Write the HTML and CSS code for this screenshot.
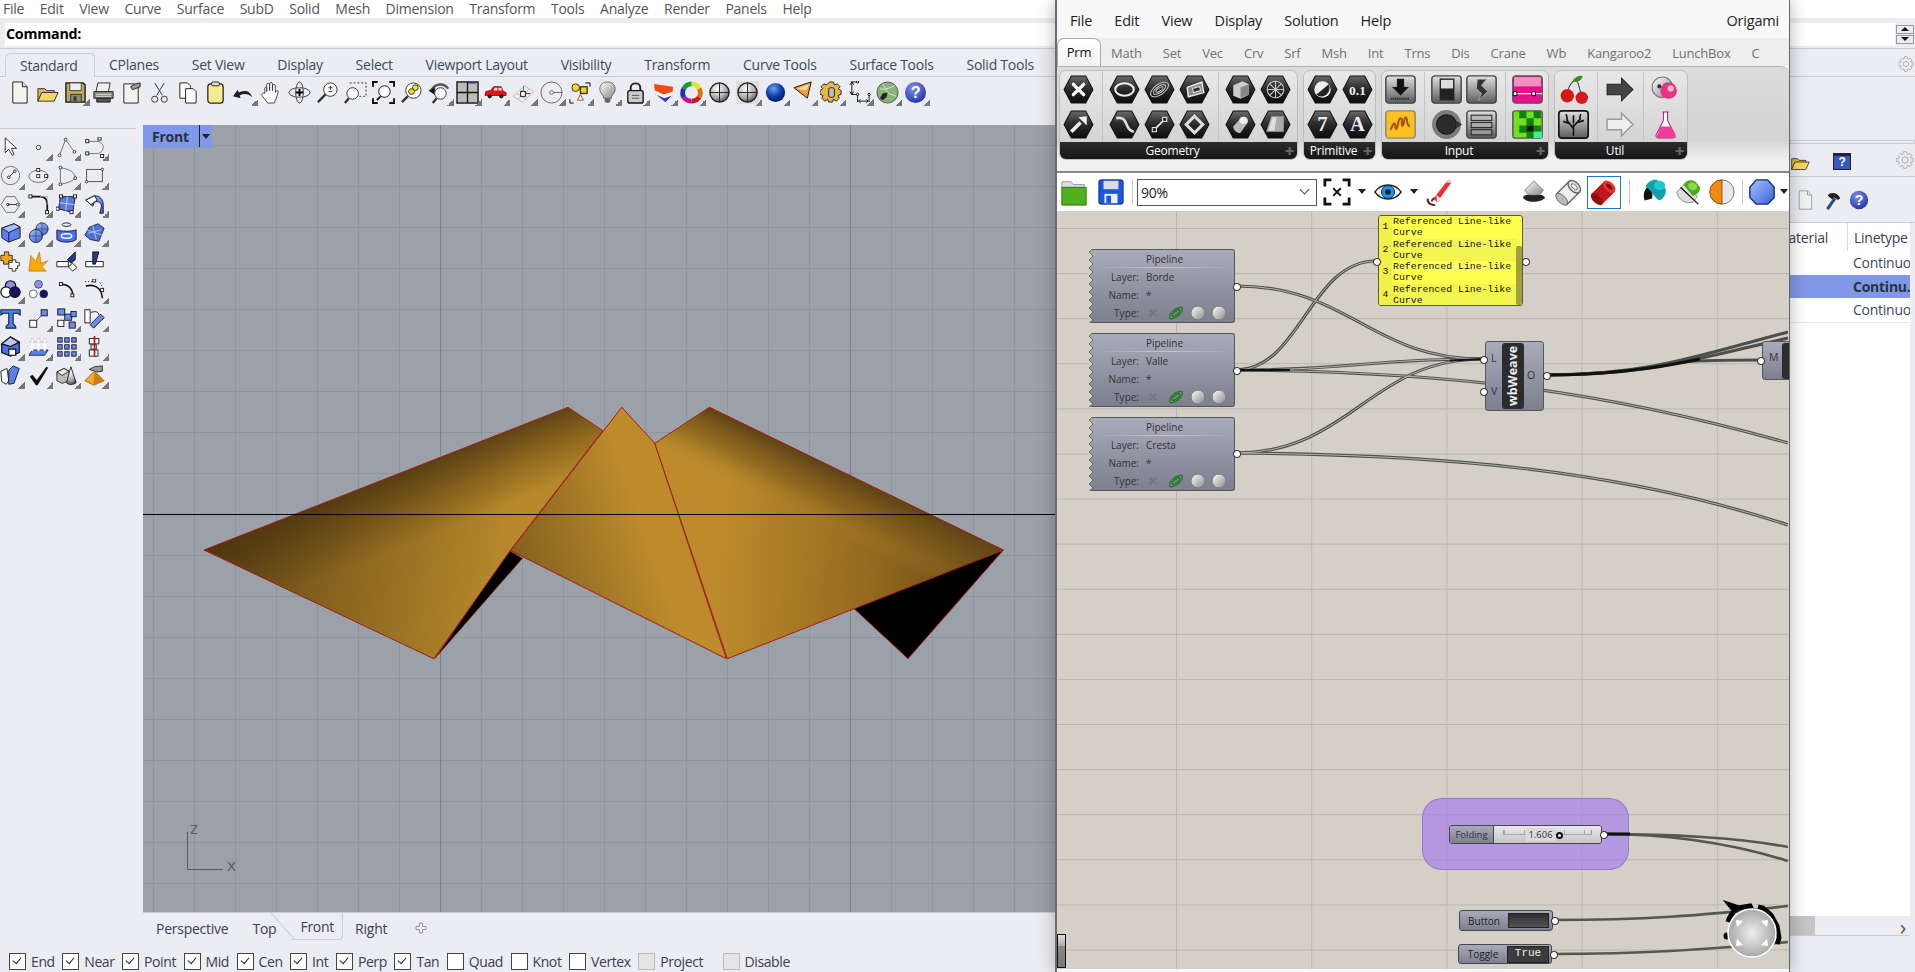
FILE: index.html
```html
<!DOCTYPE html>
<html lang="en">
<head>
<meta charset="utf-8">
<title>Rhino and Grasshopper</title>
<link rel="stylesheet" href="styles.css">
</head>
<body>
<svg class="defs" aria-hidden="true">
<defs>
<linearGradient id="hg" x1="0" y1="0" x2="0" y2="1"><stop offset="0" stop-color="#6a6a6a"/><stop offset=".45" stop-color="#2c2c2c"/><stop offset="1" stop-color="#0c0c0c"/></linearGradient>
<linearGradient id="sq" x1="0" y1="0" x2="0" y2="1"><stop offset="0" stop-color="#e0e0e0"/><stop offset="1" stop-color="#5c5c5c"/></linearGradient>
<linearGradient id="gy" x1="0" y1="0" x2="1" y2="1"><stop offset="0" stop-color="#fff"/><stop offset="1" stop-color="#888"/></linearGradient>
<radialGradient id="sph" cx=".4" cy=".3" r=".8"><stop offset="0" stop-color="#fff"/><stop offset=".6" stop-color="#aaa"/><stop offset="1" stop-color="#333"/></radialGradient>
<radialGradient id="blu" cx=".4" cy=".3" r=".8"><stop offset="0" stop-color="#6fa0f0"/><stop offset=".5" stop-color="#0c3fb0"/><stop offset="1" stop-color="#011040"/></radialGradient>
<radialGradient id="hlp" cx=".4" cy=".3" r=".8"><stop offset="0" stop-color="#7c90ec"/><stop offset="1" stop-color="#1a2ea0"/></radialGradient>
<radialGradient id="dialg"><stop offset="0" stop-color="#eee"/><stop offset="1" stop-color="#a8a8a8"/></radialGradient>
<linearGradient id="bl" x1="0" y1="0" x2="1" y2="1"><stop offset="0" stop-color="#a8c0ff"/><stop offset="1" stop-color="#3a62d8"/></linearGradient>
<linearGradient id="geoL1" gradientUnits="userSpaceOnUse" x1="386" y1="478" x2="412" y2="543"><stop offset="0" stop-color="#5e4316"/><stop offset=".5" stop-color="#8f691f"/><stop offset="1" stop-color="#b8892b"/></linearGradient>
<linearGradient id="geoL2" gradientUnits="userSpaceOnUse" x1="210" y1="550" x2="500" y2="600"><stop offset="0" stop-color="#4a3410" stop-opacity=".8"/><stop offset="1" stop-color="#4a3410" stop-opacity="0"/></linearGradient>
<linearGradient id="geoM" gradientUnits="userSpaceOnUse" x1="510" y1="560" x2="640" y2="515"><stop offset="0" stop-color="#80601f"/><stop offset="1" stop-color="#bd8b2c"/></linearGradient>
<linearGradient id="geoR1" gradientUnits="userSpaceOnUse" x1="856" y1="478" x2="830" y2="532"><stop offset="0" stop-color="#5e4316"/><stop offset=".55" stop-color="#7f5d1c" stop-opacity=".6"/><stop offset="1" stop-color="#b6872a" stop-opacity="0"/></linearGradient>
<linearGradient id="geoR2" gradientUnits="userSpaceOnUse" x1="720" y1="540" x2="1000" y2="560"><stop offset="0" stop-color="#bd8b2c"/><stop offset=".55" stop-color="#94691f"/><stop offset="1" stop-color="#5e4316"/></linearGradient>

<symbol id="r-new" viewBox="0 0 24 24"><path d="M5 1h10l5 5v17H5z" fill="#f4f4ee" stroke="#222"/><path d="M15 1v5h5" fill="#ddd" stroke="#222"/></symbol>
<symbol id="r-open" viewBox="0 0 24 24"><path d="M2 8h7l2 2h8v3H6L2 21z" fill="#e2b92e" stroke="#333"/><path d="M6 12h17l-4 9H2z" fill="#f6d860" stroke="#333"/></symbol>
<symbol id="r-save" viewBox="0 0 24 24"><path d="M2 2h18l2 2v18H2z" fill="#c0a860" stroke="#222" stroke-width="1.5"/><path d="M6 2h12v8H6z" fill="#eee" stroke="#444"/><path d="M7 14h11v8H7z" fill="#8a8a70" stroke="#333"/><path d="M10 16h3v5h-3z" fill="#333"/></symbol>
<symbol id="r-print" viewBox="0 0 24 24"><path d="M6 2h13l-2 10H4z" fill="#eee" stroke="#333"/><path d="M2 11h20v7H2z" fill="#888" stroke="#222"/><path d="M4 14h16M4 16h16" stroke="#ddd"/><path d="M5 18h14v4H5z" fill="#555" stroke="#222"/></symbol>
<symbol id="r-prop" viewBox="0 0 24 24"><path d="M4 3h11l4 3v17H4z" fill="#f4f4ee" stroke="#222"/><path d="M11 6l5-3 5-1v4l-5 2-3 1z" fill="#999" stroke="#222"/></symbol>
<symbol id="r-cut" viewBox="0 0 24 24" fill="none" stroke="#333"><path d="M7 2l8 13M17 2L9 15"/><circle cx="7" cy="19" r="3.2"/><circle cx="17" cy="19" r="3.2"/></symbol>
<symbol id="r-copy" viewBox="0 0 24 24"><path d="M4 2h8l3 3v13H4z" fill="#fff" stroke="#222"/><path d="M10 8h8l3 3v12H10z" fill="#fff" stroke="#222"/></symbol>
<symbol id="r-paste" viewBox="0 0 24 24"><rect x="4" y="3" width="16" height="20" rx="3" fill="#f8ea90" stroke="#222" stroke-width="1.3"/><rect x="8" y="1" width="8" height="4" rx="1" fill="#ddd" stroke="#222"/></symbol>
<symbol id="r-undo" viewBox="0 0 24 24"><path d="M21 17c-2-7-8-8-14-5l-1-3-5 7 8 2-1-3c4-2 9-2 13 2z" fill="#222"/></symbol>
<symbol id="r-hand" viewBox="0 0 24 24"><path d="M5 13V8c0-2 2-2 2 0v3V4c0-2 3-2 3 0v6V3c0-2 3-2 3 0v7V5c0-2 3-2 3 0v7c1-2 3-3 3-1l-2 7-2 5H8L2 15c-1-2 2-3 3-2z" fill="#fff" stroke="#333" stroke-width=".9"/></symbol>
<symbol id="r-rot" viewBox="0 0 24 24" fill="none" stroke="#444"><ellipse cx="12" cy="12" rx="11" ry="5"/><ellipse cx="12" cy="12" rx="4" ry="11"/><path d="M8 12h8M12 8v8" stroke="#000" stroke-width="2"/></symbol>
<symbol id="r-zin" viewBox="0 0 24 24" fill="none" stroke="#333"><circle cx="15" cy="9" r="7" fill="#fff"/><path d="M10 14l-8 8" stroke-width="2.4"/><path d="M13 7h4M15 5v4M13 11h4"/></symbol>
<symbol id="r-zwin" viewBox="0 0 24 24" fill="none" stroke="#333"><path d="M6 2h17v14h-7" stroke-dasharray="2 2"/><circle cx="9" cy="13" r="6" fill="#fff"/><path d="M5 18l-4 5" stroke-width="2.4"/></symbol>
<symbol id="r-zext" viewBox="0 0 24 24" fill="none" stroke="#111" stroke-width="2"><path d="M1 6V1h5M18 1h5v5M23 18v5h-5M6 23H1v-5"/><circle cx="13" cy="11" r="6" fill="#fff" stroke-width="1"/><path d="M9 16l-4 4"/></symbol>
<symbol id="r-zsel" viewBox="0 0 24 24" fill="none" stroke="#333"><circle cx="14" cy="10" r="8" fill="#fff"/><circle cx="16" cy="7" r="3" fill="#f0e020"/><circle cx="12" cy="11" r="3" fill="#f0e020"/><path d="M8 16l-6 6" stroke-width="2.4"/></symbol>
<symbol id="r-uv" viewBox="0 0 24 24" fill="none" stroke="#333"><path d="M4 9C8 2 17 2 21 8" stroke-width="2.5" stroke="#555"/><path d="M1 10l6-3 0 7z" fill="#111"/><circle cx="13" cy="13" r="6" fill="#fff"/><path d="M9 18l-4 5" stroke-width="2.4"/></symbol>
<symbol id="r-four" viewBox="0 0 24 24"><rect x="1" y="1" width="22" height="22" fill="#bbb" stroke="#111" stroke-width="1.4"/><path d="M12 1v22M1 12h22" stroke="#111" stroke-width="1.4"/><path d="M13 2h8" stroke="#2040c0" stroke-width="1.4"/></symbol>
<symbol id="r-car" viewBox="0 0 24 24"><path d="M1 15l1-4 5-1 3-4h8l2 5 3 1v3z" fill="#e01818" stroke="#a00"/><path d="M11 7h3v3h-4zM15 7h3l1 3h-4z" fill="#ddd"/><circle cx="6" cy="16" r="2.2" fill="#222"/><circle cx="18" cy="16" r="2.2" fill="#222"/></symbol>
<symbol id="r-grid" viewBox="0 0 24 24" fill="none" stroke="#bbb"><path d="M1 16L13 5l10 6-12 11zM5 13l10 6M9 9l10 6M6 19L18 8"/><rect x="9" y="11" width="5" height="5" fill="#fff" stroke="#111"/><path d="M14 13h5" stroke="#c00"/><path d="M12 11V5" stroke="#292"/></symbol>
<symbol id="r-circ" viewBox="0 0 24 24" fill="none" stroke="#666"><circle cx="12" cy="12" r="11"/><circle cx="12" cy="12" r="2" fill="#fff"/><path d="M14 12h9"/></symbol>
<symbol id="r-sg" viewBox="0 0 24 24" stroke="#333"><path d="M2 23h4M2 23v-4M18 2h5v4" fill="none" stroke="#000"/><circle cx="8" cy="7" r="4" fill="#f0d820"/><rect x="13" y="6" width="7" height="7" fill="#f0d820" stroke-width="1.4"/><path d="M10 20l3-6 3 6z" fill="#fff" stroke="#a05020"/></symbol>
<symbol id="r-bulb" viewBox="0 0 24 24"><path d="M12 1c5 0 8 3 8 8 0 4-4 5-4 9H8c0-4-4-5-4-9 0-5 3-8 8-8z" fill="url(#gy)" stroke="#666"/><path d="M9 18h6v4l-3 1-3-1z" fill="#666"/></symbol>
<symbol id="r-lock" viewBox="0 0 24 24"><path d="M7 11V7c0-6 10-6 10 0v4" fill="none" stroke="#222" stroke-width="2"/><rect x="4" y="10" width="16" height="13" rx="2" fill="#ccc" stroke="#111" stroke-width="1.4"/><path d="M8 15h8M8 18h8" stroke="#555"/></symbol>
<symbol id="r-shd" viewBox="0 0 24 24"><path d="M2 3l20 3-1 11-7 5L4 16z" fill="#f04a10"/><path d="M3 10l9 4 10-3-1 6-7 5-10-6z" fill="#fff"/><path d="M4 14l9 4 8-3-7 7z" fill="#2040b0"/></symbol>
<symbol id="r-wheel" viewBox="0 0 24 24" fill="none" stroke-width="5"><path d="M12 3a9 9 0 0 1 8 5" stroke="#e8e020"/><path d="M20 8a9 9 0 0 1 0 9" stroke="#e07010"/><path d="M20 17a9 9 0 0 1-8 4" stroke="#d01818"/><path d="M12 21a9 9 0 0 1-8-4" stroke="#c010a0"/><path d="M4 17a9 9 0 0 1 0-9" stroke="#2030c0"/><path d="M4 8a9 9 0 0 1 8-5" stroke="#10a040"/></symbol>
<symbol id="r-sp" viewBox="0 0 24 24"><circle cx="12" cy="12" r="10" fill="url(#sph)" stroke="#222" stroke-width="1.4"/><path d="M2 12h20M12 2v20" stroke="#222"/></symbol>
<symbol id="r-spd" viewBox="0 0 24 24"><rect width="24" height="24" fill="#ddd"/><circle cx="12" cy="12" r="10" fill="url(#sph)" stroke="#222" stroke-width="1.4"/><path d="M2 12h20M12 2v20" stroke="#222"/></symbol>
<symbol id="r-bs" viewBox="0 0 24 24"><circle cx="12" cy="12" r="10" fill="url(#blu)"/></symbol>
<symbol id="r-cone" viewBox="0 0 24 24"><path d="M2 7L20 1l-4 17z" fill="#f0a030" stroke="#111"/><path d="M5 8l13-5-3 7z" fill="#f6d890"/></symbol>
<symbol id="r-gear" viewBox="0 0 24 24"><path d="M10 1h4l1 3 3-1 3 3-2 2 3 2v4l-3 1 1 3-3 3-3-2-1 3h-4l-1-3-3 2-3-3 1-3-3-1v-4l3-2-2-2 3-3 3 1z" fill="#e8b840" stroke="#222"/><rect x="9" y="7" width="6" height="10" rx="2" fill="#bbb" stroke="#222"/></symbol>
<symbol id="r-dim" viewBox="0 0 24 24" fill="none" stroke="#111"><path d="M3 1h7M3 14h6M4 2v11M2 4l2-3 2 3M2 11l2 3 2-3M10 14v8M22 14v8M11 21h10M13 19l-2 2 2 2M19 19l2 2-2 2" /><circle cx="10" cy="1" r="1.2" fill="#fff"/><circle cx="10" cy="14" r="1.2" fill="#fff"/><circle cx="22" cy="14" r="1.2" fill="#fff"/></symbol>
<symbol id="r-gb" viewBox="0 0 24 24"><circle cx="12" cy="12" r="11" fill="#8ab27a" stroke="#555"/><path d="M4 8c6 2 12-2 16-3M7 3l6 10 8 3" fill="none" stroke="#d8eac8"/><path d="M4 18l3-5 5-1-1 5-4 3z" fill="#222"/></symbol>
<symbol id="r-help" viewBox="0 0 24 24"><circle cx="12" cy="12" r="11" fill="url(#hlp)"/><text x="12" y="18" class="qm">?</text></symbol>

<symbol id="l-arrow" viewBox="0 0 24 24"><path d="M6 1v17l4-4 4 7 2-1-3-7h6z" fill="#fff" stroke="#222"/></symbol>
<symbol id="l-pt" viewBox="0 0 24 24"><circle cx="12" cy="12" r="2.5" fill="#fff" stroke="#222"/></symbol>
<symbol id="l-poly" viewBox="0 0 24 24" fill="#fff" stroke="#333"><path d="M4 21L11 3l10 14" fill="none" stroke="#666"/><circle cx="4" cy="21" r="1.6"/><circle cx="11" cy="3" r="1.6"/><circle cx="21" cy="17" r="1.6"/></symbol>
<symbol id="l-curve" viewBox="0 0 24 24" fill="#fff" stroke="#111"><path d="M4 5h10c6 0 8 4 8 7s-3 7-8 7H4" fill="none" stroke="#666"/><rect x="2" y="3" width="3.5" height="3.5"/><rect x="16" y="0" width="3.5" height="3.5"/><rect x="2" y="17" width="3.5" height="3.5"/><rect x="19" y="20" width="3.5" height="3.5"/></symbol>
<symbol id="l-circ" viewBox="0 0 24 24" fill="none" stroke="#666"><circle cx="12" cy="12" r="10.5"/><path d="M10 14l7-7" stroke="#222"/><circle cx="10" cy="14" r="1.5" fill="#fff" stroke="#222"/><circle cx="17" cy="7" r="1.5" fill="#fff" stroke="#222"/></symbol>
<symbol id="l-ell" viewBox="0 0 24 24" fill="#fff" stroke="#222"><ellipse cx="12" cy="13" rx="11" ry="7" fill="none" stroke="#666"/><rect x="10" y="4" width="3.4" height="3.4"/><rect x="10" y="11" width="3.4" height="3.4"/><rect x="19" y="11" width="3.4" height="3.4"/></symbol>
<symbol id="l-arc" viewBox="0 0 24 24" fill="#fff" stroke="#222"><path d="M5 3v19" fill="none" stroke="#666"/><path d="M5 3c12 2 17 6 17 12-4 4-10 6-17 7" fill="none" stroke="#666"/><circle cx="5" cy="3" r="1.6"/><circle cx="22" cy="15" r="1.6"/><circle cx="5" cy="22" r="1.6"/></symbol>
<symbol id="l-rect" viewBox="0 0 24 24" fill="#fff" stroke="#222"><rect x="3" y="5" width="18" height="14" fill="none" stroke="#444"/><circle cx="3" cy="19" r="1.4"/><circle cx="21" cy="5" r="1.4"/></symbol>
<symbol id="l-hex" viewBox="0 0 24 24" fill="#fff" stroke="#666"><path d="M7 3h10l6 9-6 9H7L1 12z" fill="none"/><circle cx="9" cy="12" r="1.4" stroke="#222"/><path d="M9 12h11" stroke="#222"/><circle cx="20" cy="12" r="1.4" stroke="#222"/></symbol>
<symbol id="l-fil" viewBox="0 0 24 24" fill="#fff" stroke="#111"><path d="M3 3h11c6 0 8 4 8 9v8" fill="none" stroke-width="2"/><path d="M14 3h8v9" fill="none" stroke="#aaa"/><rect x="1" y="1" width="3.5" height="3.5"/><rect x="20" y="19" width="3.5" height="3.5"/></symbol>
<symbol id="l-srfp" viewBox="0 0 24 24" fill="#fff" stroke="#111"><path d="M5 3h17l-3 18-16-4z" fill="#5a78d8"/><path d="M13 3l-2 16M4 10l17 2" stroke="#cdd8ff"/><rect x="4" y="1" width="3.5" height="3.5"/><rect x="20" y="1" width="3.5" height="3.5"/><rect x="0" y="15" width="3.5" height="3.5"/><rect x="16" y="19" width="3.5" height="3.5"/></symbol>
<symbol id="l-srf" viewBox="0 0 24 24" stroke="#111"><path d="M2 7l10-5c6 0 10 4 10 10v10l-4 0 2-8c0-4-3-6-8-5l-2 5z" fill="url(#bl)"/><path d="M2 7l10-5 3 5-7 5z" fill="#fff"/></symbol>
<symbol id="l-box" viewBox="0 0 24 24" stroke="#111"><path d="M2 7l14-5 7 4v12l-13 5-8-5z" fill="#5a80f0"/><path d="M2 7l8 5 13-6-7-4z" fill="#a8c0ff"/><path d="M10 12v11"/></symbol>
<symbol id="l-sph" viewBox="0 0 24 24" stroke="#222"><circle cx="16" cy="8" r="7" fill="url(#bl)"/><circle cx="9" cy="16" r="7.5" fill="url(#bl)"/><path d="M9 9v14M2 16h14M16 1v14M9 8h14" stroke="#335" stroke-width=".7" fill="none"/></symbol>
<symbol id="l-cyl" viewBox="0 0 24 24" stroke="#111"><ellipse cx="12" cy="3" rx="5" ry="2" fill="none"/><path d="M1 9c5 2 17 2 22 0v11c-5 4-17 4-22 0z" fill="#4a70f0"/><ellipse cx="12" cy="16" rx="6" ry="2.5" fill="none" stroke="#fff" stroke-width="1.6"/></symbol>
<symbol id="l-mesh" viewBox="0 0 24 24" stroke="#223"><path d="M6 6l10-4 7 5-6 15-10-2-6-5z" fill="#4a70d8"/><path d="M4 13l16-4M10 4l4 16M3 9l18 6" stroke="#c8d4ff" stroke-width=".9"/></symbol>
<symbol id="l-puz" viewBox="0 0 24 24" stroke="#222"><path d="M1 5h4V1h5v4h4v6h-4v4H4v-4H1z" fill="#f0a818"/><path d="M10 13h4v-3h4v3h4v4h-2v3h-2v3h-4v-3h-4z" fill="#fff"/></symbol>
<symbol id="l-exp" viewBox="0 0 24 24"><path d="M1 23L3 5l6 7 4-11 2 13 8-3-7 7 5 5z" fill="#f8a808" stroke="#a06000" stroke-width=".6"/></symbol>
<symbol id="l-trim" viewBox="0 0 24 24" stroke="#111"><path d="M1 12h13v6H1z" fill="#fff"/><path d="M13 10l9-9v9l-5 4z" fill="#203c90"/><path d="M14 18l5-4 5 5-5 4z" fill="#fff"/></symbol>
<symbol id="l-spl" viewBox="0 0 24 24" stroke="#111"><path d="M2 12h20v6H2z" fill="#fff"/><path d="M10 15V1h7l-4 14z" fill="#203c90"/></symbol>
<symbol id="l-c3" viewBox="0 0 24 24" stroke="#111" stroke-width="1.4"><circle cx="12" cy="8" r="6" fill="#9090e8"/><circle cx="7" cy="15" r="6" fill="#fff"/><circle cx="17" cy="15" r="6" fill="#141470"/></symbol>
<symbol id="l-c3b" viewBox="0 0 24 24" stroke="#333" stroke-width=".8"><circle cx="12" cy="6" r="4.5" fill="#9090e8"/><circle cx="6" cy="17" r="4.5" fill="#fff"/><circle cx="18" cy="17" r="4.5" fill="#141470"/></symbol>
<symbol id="l-ap" viewBox="0 0 24 24" fill="#fff" stroke="#111"><path d="M6 6c8 0 13 5 13 12" fill="none" stroke-width="1.8"/><rect x="4" y="4" width="3.4" height="3.4"/><rect x="17" y="17" width="3.4" height="3.4"/></symbol>
<symbol id="l-off" viewBox="0 0 24 24" fill="#fff" stroke="#111"><path d="M2 8c8-2 18 0 19 14" fill="none" stroke-width="1.8"/><path d="M1 3h14M18 4l5 8" fill="none" stroke-dasharray="1.5 2"/><rect x="10" y="0" width="3.4" height="3.4"/><rect x="19" y="11" width="3.4" height="3.4"/></symbol>
<symbol id="l-t" viewBox="0 0 24 24"><path d="M1 2h22v6l-3-2h-5v12l3 3v2H7v-2l3-3V6H4L1 8z" fill="#4a80e8" stroke="#102050" stroke-width="1.3"/></symbol>
<symbol id="l-mv" viewBox="0 0 24 24" stroke="#111"><rect x="2" y="14" width="8" height="8" fill="#fff"/><rect x="15" y="2" width="7" height="7" fill="#6a8cf0"/><path d="M10 14l5-5" stroke="#555"/></symbol>
<symbol id="l-arr" viewBox="0 0 24 24" stroke="#111"><rect x="2" y="1" width="8" height="7" fill="#6a8cf0"/><rect x="10" y="7" width="8" height="7" fill="#6a8cf0"/><rect x="17" y="4" width="6" height="6" fill="#6a8cf0"/><rect x="2" y="14" width="7" height="7" fill="#fff"/><rect x="15" y="16" width="7" height="7" fill="#6a8cf0"/></symbol>
<symbol id="l-rot" viewBox="0 0 24 24" stroke="#111"><rect x="1" y="2" width="6" height="15" fill="#fff"/><path d="M8 5c6-2 9 0 9 3" fill="none"/><path d="M19 7l4 4-12 12-4-4z" fill="#6a8cf0"/></symbol>
<symbol id="l-cube" viewBox="0 0 24 24" stroke="#111" stroke-width="1.4"><path d="M2 9l10-8 10 6v12l-10 4-10-4z" fill="#4a70f0"/><path d="M2 9l10-8 10 6-10 5z" fill="#b8c8ff"/><path d="M10 15h8v7h-8z" fill="#fff"/></symbol>
<symbol id="l-up" viewBox="0 0 24 24"><path d="M5 16h18l-4 6H1z" fill="#5a80e8" stroke="#223"/><path d="M5 17V6M12 17V6M19 17V6" stroke="#fff" stroke-width="2.2"/><path d="M2 7l3-5 3 5zM9 7l3-5 3 5zM16 7l3-5 3 5z" fill="#fff" stroke="#666" stroke-width=".3"/></symbol>
<symbol id="l-ga" viewBox="0 0 24 24" fill="#6a8cf0" stroke="#111"><rect x="2" y="2" width="5" height="5"/><rect x="10" y="2" width="5" height="5"/><rect x="18" y="2" width="5" height="5"/><rect x="2" y="10" width="5" height="5"/><rect x="10" y="10" width="5" height="5"/><rect x="18" y="10" width="5" height="5"/><rect x="2" y="18" width="5" height="5"/><rect x="10" y="18" width="5" height="5"/><rect x="18" y="18" width="5" height="5"/></symbol>
<symbol id="l-mir" viewBox="0 0 24 24" stroke="#111"><rect x="6" y="3" width="11" height="6" fill="#fff"/><rect x="8" y="10" width="6" height="5" fill="#fff"/><rect x="6" y="16" width="10" height="7" fill="#fff"/><path d="M12 0v24" stroke="#c81818" stroke-width="2"/></symbol>
<symbol id="l-pan" viewBox="0 0 24 24" stroke="#111"><path d="M1 7l7-3 2 14-3 4-5-3z" fill="#fff"/><path d="M10 6l5-5 7 3-6 17-6 1z" fill="#5a80e8"/></symbol>
<symbol id="l-chk" viewBox="0 0 24 24"><path d="M2 13l3-2 5 6L21 2l2 1-12 20h-2z" fill="#111"/></symbol>
<symbol id="l-sol" viewBox="0 0 24 24" stroke="#222"><path d="M1 8l8-4 6 3v11l-8 3-6-3z" fill="#bbb"/><path d="M1 8l6 4 8-5-6-3z" fill="#e6e6e6"/><path d="M17 2l6 18c-2 3-10 3-11 0z" fill="url(#sph)"/></symbol>
<symbol id="l-pyr" viewBox="0 0 24 24"><path d="M6 5l6-3 9-1v6l-6 1z" fill="#999" stroke="#222"/><path d="M12 7L1 18l10 5 12-5z" fill="#f0a828" stroke="#a06010"/><path d="M12 7l-1 16 12-5z" fill="#c88018"/></symbol>

<symbol id="hexb" viewBox="0 0 30 28"><path d="M1 14L8 1h14l7 13-7 13H8z" fill="url(#hg)" stroke="#111" stroke-linejoin="round"/></symbol>
<symbol id="sqb" viewBox="0 0 30 28"><rect x=".8" y=".8" width="28.4" height="26.4" rx="3" fill="url(#sq)" stroke="#444" stroke-width="1.4"/></symbol>
<symbol id="g-x" viewBox="0 0 30 28"><use href="#hexb"/><path d="M10 9l10 10M20 9L10 19" stroke="#fff" stroke-width="3.2" stroke-linecap="round"/></symbol>
<symbol id="g-ring" viewBox="0 0 30 28"><use href="#hexb"/><ellipse cx="15" cy="14" rx="9" ry="6" fill="none" stroke="#eee" stroke-width="2"/></symbol>
<symbol id="g-spi" viewBox="0 0 30 28"><use href="#hexb"/><g fill="none" stroke="#bbb"><ellipse cx="15" cy="14" rx="10" ry="5" transform="rotate(-35 15 14)"/><ellipse cx="15" cy="14" rx="7" ry="3" transform="rotate(-35 15 14)"/><ellipse cx="15" cy="14" rx="4" ry="1.5" transform="rotate(-35 15 14)"/></g></symbol>
<symbol id="g-pan" viewBox="0 0 30 28"><use href="#hexb"/><path d="M8 12l14-5 2 10-15 4z" fill="#888" stroke="#eee" stroke-width="1.4"/><path d="M13 13l7-2 1 4-7 2z" fill="#333" stroke="#ddd"/></symbol>
<symbol id="g-box" viewBox="0 0 30 28"><use href="#hexb"/><path d="M8 10l9-4 6 3v10l-8 4-7-3z" fill="#ccc"/><path d="M15 12v10l8-3V9z" fill="#888"/></symbol>
<symbol id="g-msh" viewBox="0 0 30 28"><use href="#hexb"/><g stroke="#ccc" fill="none"><circle cx="15" cy="14" r="8"/><path d="M7 14h16M15 6v16M9 8l12 12M21 8L9 20"/></g></symbol>
<symbol id="g-arr" viewBox="0 0 30 28"><use href="#hexb"/><path d="M8 21l9-9" stroke="#eee" stroke-width="3.5"/><path d="M23 6v9l-8-8z" fill="#eee"/></symbol>
<symbol id="g-cur" viewBox="0 0 30 28"><use href="#hexb"/><path d="M7 8c8-2 9 4 10 6s2 6 7 7" fill="none" stroke="#ddd" stroke-width="2.6"/></symbol>
<symbol id="g-lin" viewBox="0 0 30 28"><use href="#hexb"/><path d="M10 19l10-10" stroke="#eee"  stroke-width="1.6"/><rect x="8" y="17" width="4" height="4" fill="#222" stroke="#eee"/><rect x="18" y="7" width="4" height="4" fill="#222" stroke="#eee"/></symbol>
<symbol id="g-dia" viewBox="0 0 30 28"><use href="#hexb"/><path d="M15 6l8 8-8 8-8-8z" fill="none" stroke="#ddd" stroke-width="3"/></symbol>
<symbol id="g-cyl" viewBox="0 0 30 28"><use href="#hexb"/><path d="M8 16l8-9c3-1 6 2 6 5l-7 10c-3 1-7-2-7-6z" fill="#bbb"/><ellipse cx="18" cy="10" rx="4" ry="3.5" fill="#eee"/></symbol>
<symbol id="g-srf" viewBox="0 0 30 28"><use href="#hexb"/><path d="M11 6h12v15H6z" fill="#aaa"/><path d="M12 7l-4 13h6l2-13z" fill="#ddd"/></symbol>
<symbol id="g-hb" viewBox="0 0 30 28"><use href="#hexb"/><circle cx="15" cy="14" r="8" fill="#eee"/><path d="M21 9A8 8 0 0 1 9 19z" fill="#222"/></symbol>
<symbol id="g-dl" viewBox="0 0 30 28"><use href="#sqb"/><path d="M12 4h6v8h4l-7 7-7-7h4z" fill="#111" stroke="#111"/><path d="M6 23h18" stroke="#111" stroke-dasharray="1 1" stroke-width="2"/></symbol>
<symbol id="g-yel" viewBox="0 0 30 28"><rect x=".8" y=".8" width="28.4" height="26.4" rx="3" fill="#fcc020" stroke="#8a8a70" stroke-width="1.4"/><path d="M5 19c2-1 2-6 4-6s0 6 2 5 1-9 4-10 0 8 2 7 1-8 3-8 0 7 4 9" fill="none" stroke="#a05808" stroke-width="2"/></symbol>
<symbol id="g-tog" viewBox="0 0 30 28"><use href="#sqb"/><rect x="9" y="4" width="13" height="20" fill="#ddd" stroke="#222" stroke-width="1.3"/><rect x="9" y="13" width="13" height="11" fill="#222"/></symbol>
<symbol id="g-bolt" viewBox="0 0 30 28"><use href="#sqb"/><path d="M11 4h9l-5 6 6 6-9 9 3-7-5-5z" fill="#333" stroke="#bbb" stroke-width=".7"/></symbol>
<symbol id="g-btn" viewBox="0 0 30 28"><circle cx="15" cy="14" r="14" fill="#7c7c7c"/><circle cx="15" cy="14" r="9.5" fill="#2c2c2c" stroke="#111"/><path d="M24 10l6 4-6 4z" fill="#333"/></symbol>
<symbol id="g-lst" viewBox="0 0 30 28"><use href="#sqb"/><rect x="5" y="5" width="20" height="5" fill="#bbb" stroke="#222"/><rect x="5" y="12" width="20" height="5" fill="#aaa" stroke="#222"/><rect x="5" y="19" width="20" height="5" fill="#999" stroke="#222"/></symbol>
<symbol id="g-pnk" viewBox="0 0 30 28"><rect x=".8" y=".8" width="28.4" height="26.4" rx="3" fill="#e8108c" stroke="#555" stroke-width="1.4"/><rect x="2" y="2" width="26" height="9" fill="#f090c0"/><path d="M1 18h28" stroke="#fff"/><circle cx="3" cy="18" r="2" fill="#fff" stroke="#111"/><circle cx="21" cy="18" r="2" fill="#fff" stroke="#111"/></symbol>
<symbol id="g-chk" viewBox="0 0 30 28"><rect x=".8" y=".8" width="28.4" height="26.4" rx="2" fill="#70e020" stroke="#555" stroke-width="1.4"/><path d="M7 1h7v7H7zM21 1h7v7h-7zM14 8h7v7h-7zM7 15h7v7H7zM21 15h7v6h-7zM14 21h7v6h-7z" fill="#108010"/><path d="M14 15h7v6h-7z" fill="#042004"/><path d="M21 21h8v6h-8z" fill="#40f0a0"/></symbol>
<symbol id="g-ch" viewBox="0 0 30 28"><circle cx="9" cy="20" r="6.5" fill="#d81818"/><circle cx="23" cy="22" r="6" fill="#d81818"/><path d="M10 14c1-5 4-8 8-10 2 5 3 9 4 13" fill="none" stroke="#444"/><path d="M14 6c2-4 6-6 10-5-1 4-5 7-10 5z" fill="#3c9020"/></symbol>
<symbol id="g-tree" viewBox="0 0 30 28"><rect x=".8" y=".8" width="28.4" height="26.4" rx="3" fill="url(#sq)" stroke="#111" stroke-width="1.6"/><path d="M15 25V14M15 18L8 9M15 16l7-8M15 13V5M11 13L5 11M19 12l6-2M9 9L8 4M21 8l1-4" stroke="#111" stroke-width="1.6" fill="none"/></symbol>
<symbol id="g-ra" viewBox="0 0 30 28"><path d="M3 9h14V3l11 11-11 11v-6H3z" fill="#444" stroke="#222"/></symbol>
<symbol id="g-rb" viewBox="0 0 30 28"><path d="M3 9h14V3l11 11-11 11v-6H3z" fill="#eee" stroke="#999" stroke-width="1.4"/></symbol>
<symbol id="g-spp" viewBox="0 0 30 28"><circle cx="12" cy="12" r="10" fill="url(#gy)" stroke="#777"/><circle cx="18" cy="15" r="8" fill="#e8308c"/><circle cx="20" cy="13" r="3" fill="#fbb"/><circle cx="9" cy="11" r="2" fill="#333"/></symbol>
<symbol id="g-fl" viewBox="0 0 30 28"><path d="M12 2h6M13 2v8L6 24c-1 2 1 3 2 3h14c1 0 3-1 2-3l-7-14V2" fill="#fff" stroke="#b02070"/><path d="M10 16h10l5 11H6z" fill="#ee3c98"/></symbol>

<symbol id="t-op" viewBox="0 0 30 30"><path d="M2 4h10l2 3h12v4H2z" fill="#ddd" stroke="#999"/><path d="M2 10h26v19H2z" fill="#4fb020" stroke="#2a7010"/></symbol>
<symbol id="t-sv" viewBox="0 0 30 30"><rect x="2" y="2" width="26" height="26" rx="2" fill="#1858e0" stroke="#0c2c80"/><rect x="7" y="3" width="16" height="9" fill="#ddd"/><rect x="8" y="17" width="14" height="10" fill="#eee"/><rect x="10" y="19" width="5" height="8" fill="#1858e0"/></symbol>
<symbol id="t-foc" viewBox="0 0 30 30" fill="none" stroke="#111" stroke-width="3"><path d="M2 9V2h7M21 2h7v7M28 21v7h-7M9 28H2v-7"/><path d="M11 11l8 8M19 11l-8 8" stroke-width="2"/></symbol>
<symbol id="t-eye" viewBox="0 0 30 20"><path d="M1 10C8 0 22 0 29 10 22 20 8 20 1 10z" fill="#fff" stroke="#222" stroke-width="1.5"/><circle cx="15" cy="10" r="7" fill="#2090f0" stroke="#124"/><circle cx="15" cy="10" r="3" fill="#022"/></symbol>
<symbol id="t-br" viewBox="0 0 30 30"><path d="M7 25c2-5 7-4 8 0M3 22c-1 6 5 7 8 7" fill="none" stroke="#602020" stroke-width="2"/><path d="M9 22L24 3l4 2-15 21z" fill="#e83030"/><path d="M22 5l5-4 1 4z" fill="#f8c0c0"/><path d="M12 18l6 5-5 3z" fill="#eee"/></symbol>
<symbol id="t-a" viewBox="0 0 30 30"><path d="M3 21c3-4 5-3 12-3s9-1 12 3c-4 6-20 6-24 0z" fill="#222"/><path d="M5 13L15 3l10 10c-2 4-4 5-10 5s-8-1-10-5z" fill="url(#gy)" stroke="#888"/></symbol>
<symbol id="t-b" viewBox="0 0 30 30"><g transform="rotate(-45 15 15)"><rect x="4" y="7" width="19" height="16" fill="#eee" stroke="#666" stroke-width="1.5"/><ellipse cx="23" cy="15" rx="5" ry="8" fill="#ddd" stroke="#666" stroke-width="1.5"/><ellipse cx="23" cy="15" rx="2" ry="4" fill="#fff" stroke="#666"/><ellipse cx="4" cy="15" rx="4" ry="8" fill="#bbb" stroke="#666"/></g></symbol>
<symbol id="t-c" viewBox="0 0 30 30"><g transform="rotate(-45 15 15)"><rect x="4" y="7" width="19" height="16" fill="#c01818"/><ellipse cx="23" cy="15" rx="5" ry="8" fill="#e83030"/><ellipse cx="23" cy="15" rx="2" ry="4" fill="#701010"/><ellipse cx="4" cy="15" rx="4" ry="8" fill="#901010"/></g></symbol>
<symbol id="t-d" viewBox="0 0 30 30"><path d="M5 24c-3-7 1-16 9-18l-1 16z" fill="#111"/><path d="M6 9c2-5 8-8 12-7l9 9c2 5-1 11-6 13-6-3-6-8-15-15z" fill="#10a0a8"/><ellipse cx="21" cy="8" rx="6" ry="5" fill="#20c8d0"/></symbol>
<symbol id="t-e" viewBox="0 0 30 30"><path d="M3 15l9-9 13 14-5 6c-8 2-16-3-17-11z" fill="#ddd" stroke="#888"/><path d="M10 7c3-5 9-6 13-3l5 6c0 5-4 9-8 9z" fill="#50a818"/><ellipse cx="20" cy="9" rx="5" ry="4" fill="#8ad850" transform="rotate(30 20 9)"/><path d="M7 10l19 18" stroke="#111" stroke-width="1.4"/></symbol>
<symbol id="t-f" viewBox="0 0 30 30"><circle cx="15" cy="15" r="13" fill="#e8e8e8" stroke="#777"/><path d="M15 2a13 13 0 0 0 0 26z" fill="#f08c10" stroke="#a04c00"/></symbol>
<symbol id="t-g" viewBox="0 0 30 30"><path d="M9 2h12l7 8v11l-7 7H9l-7-7V10z" fill="url(#bl)" stroke="#10307c" stroke-width="1.5" stroke-linejoin="round"/></symbol>
<symbol id="t-dn" viewBox="0 0 8 6"><path d="M0 0h8L4 5z" fill="#222"/></symbol>
<symbol id="gear" viewBox="0 0 24 24" fill="none" stroke="#999"><circle cx="12" cy="12" r="4"/><path d="M10 1h4l1 4 3-2 3 3-2 3 4 1v4l-4 1 2 3-3 3-3-2-1 4h-4l-1-4-3 2-3-3 2-3-4-1v-4l4-1-2-3 3-3 3 2z"/></symbol>
<symbol id="zig" viewBox="0 0 5 74"><path d="M5 -1L0 3l4 4-4 4 4 4-4 4 4 4-4 4 4 4-4 4 4 4-4 4 4 4-4 4 4 4-4 4 4 4-4 4 4 4-4 3 5 3H-2V-1z" fill="#d4d0c8" stroke="#555" stroke-width=".8"/></symbol>
<symbol id="pt-x" viewBox="0 0 12 12"><path d="M2 2l8 8M10 2l-8 8" stroke="#777" stroke-width="2.4"/></symbol>
<symbol id="pt-g" viewBox="0 0 18 16"><g fill="none" stroke="#1b7a1b" stroke-width="1.5"><ellipse cx="9" cy="8" rx="9" ry="4" transform="rotate(-40 9 8)"/><ellipse cx="9" cy="8" rx="5.5" ry="2" transform="rotate(-40 9 8)"/></g></symbol>
<symbol id="pt-s" viewBox="0 0 16 16"><circle cx="8" cy="8" r="7" fill="url(#gy)" stroke="#777"/></symbol>
</defs>
</svg>

<div class="rhino">
  <nav class="menu">
    <span>File</span><span>Edit</span><span>View</span><span>Curve</span><span>Surface</span><span>SubD</span><span>Solid</span><span>Mesh</span><span>Dimension</span><span>Transform</span><span>Tools</span><span>Analyze</span><span>Render</span><span>Panels</span><span>Help</span>
  </nav>
  <div class="cmdwrap">
    <div class="cmd"><b>Command:</b></div>
    <div class="spin"><span class="up"></span><span class="down"></span></div>
  </div>
  <div class="tabs">
    <span class="tab active">Standard</span><span class="tab">CPlanes</span><span class="tab">Set View</span><span class="tab">Display</span><span class="tab">Select</span><span class="tab">Viewport Layout</span><span class="tab">Visibility</span><span class="tab">Transform</span><span class="tab">Curve Tools</span><span class="tab">Surface Tools</span><span class="tab">Solid Tools</span>
    <svg class="gear tabgear"><use href="#gear"/></svg>
  </div>
  <div class="tbar">
    <i class="c"><svg><use href="#r-new"/></svg></i><i class="c"><svg><use href="#r-open"/></svg></i><i class="c f"><svg><use href="#r-save"/></svg></i><i class="c"><svg><use href="#r-print"/></svg></i><i class="c"><svg><use href="#r-prop"/></svg></i><i class="c"><svg><use href="#r-cut"/></svg></i><i class="c"><svg><use href="#r-copy"/></svg></i><i class="c"><svg><use href="#r-paste"/></svg></i><i class="c f"><svg><use href="#r-undo"/></svg></i><i class="c"><svg><use href="#r-hand"/></svg></i><i class="c"><svg><use href="#r-rot"/></svg></i><i class="c"><svg><use href="#r-zin"/></svg></i><i class="c"><svg><use href="#r-zwin"/></svg></i><i class="c"><svg><use href="#r-zext"/></svg></i><i class="c"><svg><use href="#r-zsel"/></svg></i><i class="c f"><svg><use href="#r-uv"/></svg></i><i class="c f"><svg><use href="#r-four"/></svg></i><i class="c f"><svg><use href="#r-car"/></svg></i><i class="c f"><svg><use href="#r-grid"/></svg></i><i class="c f"><svg><use href="#r-circ"/></svg></i><i class="c f"><svg><use href="#r-sg"/></svg></i><i class="c f"><svg><use href="#r-bulb"/></svg></i><i class="c f"><svg><use href="#r-lock"/></svg></i><i class="c f"><svg><use href="#r-shd"/></svg></i><i class="c f"><svg><use href="#r-wheel"/></svg></i><i class="c"><svg><use href="#r-sp"/></svg></i><i class="c f"><svg><use href="#r-spd"/></svg></i><i class="c f"><svg><use href="#r-bs"/></svg></i><i class="c f"><svg><use href="#r-cone"/></svg></i><i class="c f"><svg><use href="#r-gear"/></svg></i><i class="c f"><svg><use href="#r-dim"/></svg></i><i class="c f"><svg><use href="#r-gb"/></svg></i><i class="c f"><svg><use href="#r-help"/></svg></i>
  </div>
  <div class="main">
    <aside class="side">
      <div class="sidegrid">
        <i class="c"><svg><use href="#l-arrow"/></svg></i><i class="c f"><svg><use href="#l-pt"/></svg></i><i class="c f"><svg><use href="#l-poly"/></svg></i><i class="c f"><svg><use href="#l-curve"/></svg></i>
        <i class="c f"><svg><use href="#l-circ"/></svg></i><i class="c f"><svg><use href="#l-ell"/></svg></i><i class="c f"><svg><use href="#l-arc"/></svg></i><i class="c f"><svg><use href="#l-rect"/></svg></i>
        <i class="c f"><svg><use href="#l-hex"/></svg></i><i class="c f"><svg><use href="#l-fil"/></svg></i><i class="c f"><svg><use href="#l-srfp"/></svg></i><i class="c f"><svg><use href="#l-srf"/></svg></i>
        <i class="c f"><svg><use href="#l-box"/></svg></i><i class="c f"><svg><use href="#l-sph"/></svg></i><i class="c f"><svg><use href="#l-cyl"/></svg></i><i class="c f"><svg><use href="#l-mesh"/></svg></i>
        <i class="c"><svg><use href="#l-puz"/></svg></i><i class="c"><svg><use href="#l-exp"/></svg></i><i class="c"><svg><use href="#l-trim"/></svg></i><i class="c"><svg><use href="#l-spl"/></svg></i>
        <i class="c f"><svg><use href="#l-c3"/></svg></i><i class="c"><svg><use href="#l-c3b"/></svg></i><i class="c"><svg><use href="#l-ap"/></svg></i><i class="c f"><svg><use href="#l-off"/></svg></i>
        <i class="c"><svg><use href="#l-t"/></svg></i><i class="c f"><svg><use href="#l-mv"/></svg></i><i class="c f"><svg><use href="#l-arr"/></svg></i><i class="c f"><svg><use href="#l-rot"/></svg></i>
        <i class="c f"><svg><use href="#l-cube"/></svg></i><i class="c f"><svg><use href="#l-up"/></svg></i><i class="c f"><svg><use href="#l-ga"/></svg></i><i class="c f"><svg><use href="#l-mir"/></svg></i>
        <i class="c f"><svg><use href="#l-pan"/></svg></i><i class="c f"><svg><use href="#l-chk"/></svg></i><i class="c f"><svg><use href="#l-sol"/></svg></i><i class="c f"><svg><use href="#l-pyr"/></svg></i>
      </div>
    </aside>
    <section class="center">
      <div class="viewport">
        <svg class="geo" viewBox="143 125 1647 788">
          <path d="M853.7 608.3L1003.3 550L908 658.7Z" fill="#000" stroke="#a51b1b" stroke-width="1"/>
          <path d="M509.5 550.7L522.5 558.3L434.7 658.7Z" fill="#000" stroke="#a51b1b" stroke-width=".6"/>
          <path d="M204 550L568 407.3L602.8 430.7L510.6 550L433.7 658.7Z" fill="url(#geoL1)"/>
          <path d="M204 550L568 407.3L602.8 430.7L510.6 550L433.7 658.7Z" fill="url(#geoL2)" stroke="#a51b1b" stroke-width="1"/>
          <path d="M621.7 407.3L654.8 443.3L726.3 658.7L510.6 550.7Z" fill="url(#geoM)" stroke="#a51b1b" stroke-width="1"/>
          <path d="M709.5 407.3L1003.3 550L727.4 658.7L654.8 443.3Z" fill="url(#geoR2)"/>
          <path d="M709.5 407.3L1003.3 550L727.4 658.7L654.8 443.3Z" fill="url(#geoR1)" stroke="#a51b1b" stroke-width="1"/>
          <path d="M143 514.5H1790" stroke="#000" stroke-width="1"/>
          <path d="M187.5 832V869.5H223" fill="none" stroke="#5a5a5a" stroke-width="1"/>
          <text x="190" y="834" class="ax">z</text>
          <text x="227" y="871" class="ax">x</text>
        </svg>
        <div class="vplabel"><b>Front</b><span class="vparrow"></span></div>
      </div>
      <div class="vtabs">
        <span>Perspective</span><span>Top</span><span class="on">Front</span><span>Right</span>
        <svg class="vplus" viewBox="0 0 12 12"><path d="M4.5 1h3v3.5H11v3H7.500V11h-3V7.500H1v-3h3.500z" fill="none" stroke="#999"/></svg>
      </div>
    </section>
    <aside class="right">
      <div class="rtop"></div>
      <div class="rrow1">
        <svg class="ri1"><use href="#r-open"/></svg>
        <span class="winhelp">?</span>
        <svg class="gear rgear"><use href="#gear"/></svg>
      </div>
      <div class="rrow2">
        <svg class="ri2 faint"><use href="#r-new"/></svg>
        <svg class="ri2" viewBox="0 0 24 24"><path d="M5 22L14 9l3 2-9 13z" fill="#2a4a80"/><path d="M8 5c5-3 11-1 14 5l-3 2-4-3-3 2-5-4z" fill="#222"/></svg>
        <svg class="ri2"><use href="#r-help"/></svg>
      </div>
      <div class="rtable">
        <div class="thead"><span class="col1">Material</span><span class="col2">Linetype</span></div>
        <div class="trow">Continuous</div>
        <div class="trow sel">Continu.</div>
        <div class="trow last">Continuous</div>
      </div>
      <div class="rscroll"><span class="thumb"></span><span class="chev">›</span></div>
    </aside>
  </div>
  <div class="snap">
    <label class="ck on">End</label><label class="ck on">Near</label><label class="ck on">Point</label><label class="ck on">Mid</label><label class="ck on">Cen</label><label class="ck on">Int</label><label class="ck on">Perp</label><label class="ck on">Tan</label><label class="ck">Quad</label><label class="ck">Knot</label><label class="ck">Vertex</label><label class="ck dis">Project</label><label class="ck dis wide">Disable</label>
  </div>
</div>

<div class="gh">
  <div class="ghmenu"><span>File</span><span>Edit</span><span>View</span><span>Display</span><span>Solution</span><span>Help</span><em>Origami</em></div>
  <div class="ghtabs">
    <span class="active">Prm</span><span>Math</span><span>Set</span><span>Vec</span><span>Crv</span><span>Srf</span><span>Msh</span><span>Int</span><span>Trns</span><span>Dis</span><span>Crane</span><span>Wb</span><span>Kangaroo2</span><span>LunchBox</span><span>C</span>
  </div>
  <div class="ribbon">
    <div class="rp w-geo">
      <div class="rb">
        <div class="grp first"><i><svg><use href="#g-x"/></svg></i><i><svg><use href="#g-arr"/></svg></i></div>
        <div class="grp"><i><svg><use href="#g-ring"/></svg></i><i><svg><use href="#g-cur"/></svg></i><i><svg><use href="#g-spi"/></svg></i><i><svg><use href="#g-lin"/></svg></i><i><svg><use href="#g-pan"/></svg></i><i><svg><use href="#g-dia"/></svg></i></div>
        <div class="grp end"><i><svg><use href="#g-box"/></svg></i><i><svg><use href="#g-cyl"/></svg></i><i><svg><use href="#g-msh"/></svg></i><i><svg><use href="#g-srf"/></svg></i></div>
      </div>
      <div class="rf">Geometry<span class="pl">✚</span></div>
    </div>
    <div class="rp w-pri">
      <div class="rb">
        <div class="grp first end"><i><svg><use href="#g-hb"/></svg></i><i><svg viewBox="0 0 30 28"><use href="#hexb"/><text x="15" y="20" class="hxt sm">7</text></svg></i><i><svg viewBox="0 0 30 28"><use href="#hexb"/><text x="15" y="19" class="hxt xs">0.1</text></svg></i><i><svg viewBox="0 0 30 28"><use href="#hexb"/><text x="15" y="20" class="hxt sm">A</text></svg></i></div>
      </div>
      <div class="rf">Primitive<span class="pl">✚</span></div>
    </div>
    <div class="rp w-inp">
      <div class="rb">
        <div class="grp first"><i><svg><use href="#g-dl"/></svg></i><i><svg><use href="#g-yel"/></svg></i></div>
        <div class="grp"><i><svg><use href="#g-tog"/></svg></i><i><svg><use href="#g-btn"/></svg></i><i><svg><use href="#g-bolt"/></svg></i><i><svg><use href="#g-lst"/></svg></i></div>
        <div class="grp end"><i><svg><use href="#g-pnk"/></svg></i><i><svg><use href="#g-chk"/></svg></i></div>
      </div>
      <div class="rf">Input<span class="pl">✚</span></div>
    </div>
    <div class="rp w-utl">
      <div class="rb">
        <div class="grp first"><i><svg><use href="#g-ch"/></svg></i><i><svg><use href="#g-tree"/></svg></i></div>
        <div class="grp"><i><svg><use href="#g-ra"/></svg></i><i><svg><use href="#g-rb"/></svg></i></div>
        <div class="grp end"><i><svg><use href="#g-spp"/></svg></i><i><svg><use href="#g-fl"/></svg></i></div>
      </div>
      <div class="rf">Util<span class="pl">✚</span></div>
    </div>
  </div>
  <div class="ghbar">
    <i class="ti"><svg><use href="#t-op"/></svg></i><i class="ti sp5"><svg><use href="#t-sv"/></svg></i><span class="sep s1"></span>
    <div class="combo"><span>90%</span><span class="chv"></span></div>
    <i class="ti foc"><svg><use href="#t-foc"/></svg></i><svg class="dn"><use href="#t-dn"/></svg><i class="ti eye"><svg><use href="#t-eye"/></svg></i><svg class="dn"><use href="#t-dn"/></svg><i class="ti foc"><svg><use href="#t-br"/></svg></i>
    <span class="grow"></span>
    <i class="ti"><svg><use href="#t-a"/></svg></i><i class="ti sp1"><svg><use href="#t-b"/></svg></i><i class="ti sp1 picked"><svg><use href="#t-c"/></svg></i><span class="sep s2"></span>
    <i class="ti s3"><svg><use href="#t-d"/></svg></i><i class="ti"><svg><use href="#t-e"/></svg></i><i class="ti"><svg><use href="#t-f"/></svg></i><span class="sep s4"></span>
    <i class="ti s4b"><svg><use href="#t-g"/></svg></i><svg class="dn"><use href="#t-dn"/></svg>
  </div>
  <div class="canvas">
    <div class="group"></div>
    <svg class="wires" viewBox="1057 211 731 758">
      <g class="wo">
        <path d="M1236 286C1350 286 1370 359 1483 359"/><path d="M1236 370C1300 370 1310 261 1376 261"/><path d="M1236 370C1350 370 1370 359 1483 359"/><path d="M1236 370C1450 372 1600 390 1788 443"/><path d="M1236 453C1350 453 1370 359 1483 359"/><path d="M1236 453C1450 455 1620 470 1788 525"/>
        <path d="M1546 375C1650 375 1700 355 1788 332"/><path d="M1546 375C1650 375 1700 358 1788 338"/><path d="M1680 362C1710 360 1740 360 1760 360"/>
      </g>
      <g class="wi">
        <path d="M1236 286C1350 286 1370 359 1483 359"/><path d="M1236 370C1300 370 1310 261 1376 261"/><path d="M1236 370C1350 370 1370 359 1483 359"/><path d="M1236 370C1450 372 1600 390 1788 443"/><path d="M1236 453C1350 453 1370 359 1483 359"/><path d="M1236 453C1450 455 1620 470 1788 525"/>
      </g>
      <path class="wb" d="M1546 375C1600 375 1650 370 1700 359"/>
      <path class="wb thin" d="M1236 370H1290M1450 360.500L1483 359"/>
      <g class="wg">
        <path d="M1603 834C1680 834 1740 838 1788 847"/><path d="M1603 834C1680 834 1740 846 1788 861"/><path d="M1554 920C1640 920 1700 916 1788 906"/><path d="M1553 954C1640 954 1700 950 1788 942"/>
      </g>
      <path class="wb" d="M1603 834H1630"/>
    </svg>

    <div class="pipe p1"><svg class="zig"><use href="#zig"/></svg><div class="ptitle">Pipeline</div><div class="prow"><span>Layer:</span><span>Borde</span></div><div class="prow"><span>Name:</span><span>*</span></div><div class="prow"><span>Type:</span><span class="types"><svg class="tx"><use href="#pt-x"/></svg><svg class="tg"><use href="#pt-g"/></svg><svg class="ts"><use href="#pt-s"/></svg><svg class="ts"><use href="#pt-s"/></svg></span></div></div>
    <div class="pipe p2"><svg class="zig"><use href="#zig"/></svg><div class="ptitle">Pipeline</div><div class="prow"><span>Layer:</span><span>Valle</span></div><div class="prow"><span>Name:</span><span>*</span></div><div class="prow"><span>Type:</span><span class="types"><svg class="tx"><use href="#pt-x"/></svg><svg class="tg"><use href="#pt-g"/></svg><svg class="ts"><use href="#pt-s"/></svg><svg class="ts"><use href="#pt-s"/></svg></span></div></div>
    <div class="pipe p3"><svg class="zig"><use href="#zig"/></svg><div class="ptitle">Pipeline</div><div class="prow"><span>Layer:</span><span>Cresta</span></div><div class="prow"><span>Name:</span><span>*</span></div><div class="prow"><span>Type:</span><span class="types"><svg class="tx"><use href="#pt-x"/></svg><svg class="tg"><use href="#pt-g"/></svg><svg class="ts"><use href="#pt-s"/></svg><svg class="ts"><use href="#pt-s"/></svg></span></div></div>

    <div class="panel">
      <div class="prw"><b>1</b><span>Referenced Line-like Curve</span></div>
      <div class="prw alt"><b>2</b><span>Referenced Line-like Curve</span></div>
      <div class="prw"><b>3</b><span>Referenced Line-like Curve</span></div>
      <div class="prw alt"><b>4</b><span>Referenced Line-like Curve</span></div>
      <span class="pscroll"></span>
    </div>

    <div class="weave"><span class="wl l">L</span><span class="wl v">V</span><span class="wl o">O</span><div class="wstrip">wbWeave</div></div>
    <div class="mcomp"><span>M</span><div class="mstrip"></div></div>

    <div class="slider"><span class="sname">Folding</span><span class="strack"><span class="sticks"></span><span class="sval">1.606</span><span class="sknob"></span></span></div>
    <div class="btn"><span>Button</span><span class="bface"></span></div>
    <div class="btn tgl"><span>Toggle</span><span class="bface">True</span></div>

    <i class="grip a1"></i><i class="grip a2"></i><i class="grip a3"></i><i class="grip a4"></i><i class="grip a5"></i><i class="grip a6"></i><i class="grip a7"></i><i class="grip a8"></i><i class="grip a9"></i><i class="grip a10"></i><i class="grip a11"></i><i class="grip a12"></i>

    <svg class="dial" viewBox="0 0 64 64">
      <path d="M14 10l-4-5 9 3z M8 22a26 26 0 0 1 10-14l6-1 6-1 2 4M38 7l5 1 8 7 6 11 2 12-2 6" fill="none" stroke="#000" stroke-width="5"/>
      <circle cx="7" cy="36" r="3.5" fill="#000"/>
      <circle cx="32" cy="33" r="24" fill="url(#dialg)" stroke="#fff" stroke-width="1.5"/>
      <path d="M16 20l1 7 6-6zM48 20l-1 7-6-6zM16 46l1-7 6 6zM48 46l-1-7-6 6z" fill="#fff"/>
    </svg>
    <span class="vthumb"></span>
  </div>
</div>
</body>
</html>
```
FILE: styles.css
```css
*{box-sizing:border-box}
html,body{margin:0;padding:0;height:972px;overflow:hidden}
body{position:relative;width:1915px;background:#ecedf2;font-family:"Open Sans","Noto Sans",sans-serif;font-size:14px;color:#3a4050;letter-spacing:-.25px}
i{font-style:normal}
.defs{position:absolute;width:0;height:0}
.rhino{display:flex;flex-direction:column;height:972px}

.menu{display:flex;align-items:center;gap:15.6px;height:18px;padding-left:3px;background:#fff;overflow:hidden;line-height:16px;color:#555}
.cmdwrap{display:flex;height:31px;padding:5px 0 3px 5px;border-bottom:1px solid #c8ccd8}
.cmd{flex:0 0 1890px;height:23px;background:#fff;padding-left:1px;line-height:22px;color:#000;font-size:14.3px}
.spin{display:flex;flex-direction:column;gap:1px;margin-left:1px;padding-top:2px}
.spin span{display:block;width:18px;height:9px;border:1px solid #999;background:#ecedf2;position:relative}
.spin span::after{content:"";position:absolute;left:4px;border:4px solid transparent}
.spin .up::after{top:-3px;border-bottom-color:#111}
.spin .down::after{top:1px;border-top-color:#111}

.tabs{display:flex;align-items:flex-end;height:28px;padding-left:5px;border-bottom:1px solid #c8ccd8;position:relative;color:#3a4a5c}
.tab{padding:0 14px;height:23px;line-height:24px;white-space:nowrap;margin-right:4.8px}
.tab.active{width:90px;border:1px solid #c8ccd8;border-bottom:0;border-radius:6px 4px 0 0;background:#ecedf2;margin:0 0 -1px;height:24px}
.gear{width:16px;height:16px}
.tabgear{position:absolute;right:1px;top:7px}

.tbar{display:flex;height:48px;padding:1px 0 0 5px}
.c{position:relative;display:flex;align-items:center;justify-content:center;flex:0 0 28px;height:28px}
.c svg{width:23px;height:23px;display:block}
.f::after{content:"";position:absolute;right:-1px;bottom:0;width:7px;height:7px;background:linear-gradient(135deg,transparent 50%,#777 50%)}
.qm{font:bold 17px "Liberation Sans",sans-serif;fill:#fff;text-anchor:middle}

.main{display:flex;flex:1;min-height:0}
.side{flex:0 0 143px;padding-top:3px}
.sidegrid{display:grid;grid-template-columns:repeat(4,28px);grid-auto-rows:28.5px;width:136px;padding:4px 0 0 4px;border-top:1px solid #c8ccd8}
.sidegrid .c{left:-8px}
.sidegrid .c svg{width:21px;height:21px}

.center{display:flex;flex-direction:column;flex:1;min-width:0}
.viewport{flex:0 0 788px;position:relative;background-color:#9aa1a9;background-image:linear-gradient(to right,#7a8089 1px,transparent 1px),linear-gradient(to right,#8d949c 1px,transparent 1px),linear-gradient(to bottom,#8d949c 1px,transparent 1px);background-size:410px 100%,41px 100%,100% 41px;background-position:297px 0,10px 0,0 20px;border-bottom:1px solid #c8ccd8;overflow:hidden}
.geo{position:absolute;left:0;top:0;width:1647px;height:788px}
.ax{font:17px "Open Sans",sans-serif;fill:#5a5a5a;letter-spacing:0}
.vplabel{position:absolute;left:0;top:0;width:69px;height:23px;background:#8098e8;display:flex;align-items:center;padding-left:9px;color:#2c3040;font-size:14px}
.vparrow{position:absolute;left:56px;top:0;height:22px;border-left:1px solid #222;width:13px}
.vparrow::after{content:"";position:absolute;left:2px;top:9px;border:4px solid transparent;border-top:5px solid #222}
.vtabs{display:flex;align-items:center;height:30px;padding-left:13px;gap:24px;color:#3a4050}
.vtabs .on{position:relative;margin:-3px -12px 0 -9px;padding:0 8px 0 9px;height:27px;line-height:27px;border-right:1px solid #c8ccd8;border-bottom:1px solid #c8ccd8;border-radius:0 0 4px 0}
.vtabs .on::before{content:"";position:absolute;left:-20px;top:0;width:24px;height:27px;background:linear-gradient(to top right,transparent calc(50% - 1px),#c8ccd8 50%,transparent calc(50% + 1px))}
.vplus{width:12px;height:12px;margin-left:4px}

.right{flex:0 0 125px;display:flex;flex-direction:column;height:811px;overflow:hidden}
.rtop{height:16px;border-bottom:1px solid #c8ccd8;box-shadow:0 3px 0 -1px #ecedf2,0 3px 0 0 #c8ccd8}
.rrow1{display:flex;align-items:center;height:36px;border-bottom:1px solid #c8ccd8;position:relative;padding-top:6px}
.ri1{width:20px;height:20px}
.winhelp{margin-left:23px;width:18px;height:17px;background:#3858c0;border:1px solid #222;border-top:3px solid #223;color:#fff;font:bold 12px/12px "Liberation Sans",sans-serif;text-align:center}
.rgear{position:absolute;right:1px;top:10px;width:18px;height:18px}
.rrow2{display:flex;align-items:center;gap:7px;height:46px;padding-left:5px;border-bottom:1px solid #c8ccd8}
.ri2{width:20px;height:20px}
.faint{opacity:.45}
.rtable{flex:1;background:#fff;margin-right:5px;display:flex;flex-direction:column}
.thead{display:flex;height:28px;align-items:center}
.col1{flex:0 0 58px;overflow:hidden;white-space:nowrap;text-align:right;padding-right:19px;border-right:1px solid #d8dbe4;height:100%;line-height:30px;direction:rtl}
.col2{padding-left:6px;white-space:nowrap;overflow:hidden}
.trow{height:24px;line-height:24px;padding-left:63px;white-space:nowrap;overflow:hidden;color:#3a4a5c}
.trow.sel{background:#8098e8;font-weight:700;color:#2c3040;height:23px}
.trow.last{border-bottom:1px solid #e8eaf0;height:25px}
.rscroll{height:20px;background:#ecedf2;display:flex;justify-content:space-between;align-items:center;margin-right:5px;border-bottom:1px solid #c8ccd8;box-shadow:5px 0 0 #ecedf2}
.thumb{width:25px;height:19px;background:#c4c4c4}
.chev{margin-right:4px;font-size:22px;line-height:18px;color:#555}

.snap{display:flex;align-items:center;gap:7.500px;height:29px;padding:7px 0 0 9px;letter-spacing:-.4px}
.ck{display:flex;align-items:center;gap:5px;position:relative;color:#3a4050}
.ck::before{content:"";display:block;width:15px;height:15px;border:1px solid #444;background:#fff}
.ck.on::after{content:"";position:absolute;left:4px;top:50%;width:7px;height:4px;margin-top:-4px;border-left:1px solid #222;border-bottom:1px solid #222;transform:rotate(-50deg)}
.ck.dis::before{border-color:#bbb;background:#e4e4e4}
.ck.wide{margin-left:12px}

.gh{position:absolute;left:1055px;top:0;width:735px;height:972px;background:#f8f8f8;border-left:2px solid #6c6c6c;border-right:1px solid #666;padding-top:4px;display:flex;flex-direction:column;box-shadow:0 0 16px rgba(0,0,0,.3);letter-spacing:-.2px}
.ghmenu{display:flex;align-items:center;height:34px;padding:0 0 2px 13px;gap:22.2px;color:#222;font-size:14.5px}
.ghmenu em{margin-left:auto;margin-right:10px;font-style:normal}
.ghtabs{display:flex;align-items:flex-end;height:28px;background:#eee;font-size:13px;color:#707070;gap:21px}
.ghtabs span{line-height:26px}
.ghtabs .active{background:linear-gradient(#fff,#f2f2f2);color:#111;border:1px solid #aaa;border-bottom:0;border-radius:7px 7px 0 0;width:44px;text-align:center;height:28px;margin-right:-11px}
.ribbon{display:flex;gap:5px;height:107px;padding:3px 0 0 2px;background:linear-gradient(#dcdcdc 0,#d4d4d4 70%,#f0f0f0 88%,#f0f0f0 100%);border-top:1px solid #b0b0b0;border-radius:0 8px 0 0;border-bottom:2px solid #888}
.rp{height:90px;display:flex;flex-direction:column;border:1px solid #bdbdbd;border-radius:7px;background:linear-gradient(#e8e8e8,#cfcfcf);overflow:hidden}
.w-geo{width:239px}.w-pri{width:73px}.w-inp{width:168px}.w-utl{width:134px}
.rb{display:flex;flex:1;padding-top:1px;min-height:0}
.grp{display:grid;grid-auto-flow:column;grid-template-rows:35px 35px;grid-auto-columns:35px;padding:0 6px 0 4px;border-right:1px solid #c4c4c4}
.grp.first{padding-left:1px}
.grp.end{border-right:0}
.grp i{display:flex;align-items:center;justify-content:center}
.grp svg{width:31px;height:29px;display:block}
.hxt{fill:#eee;font-family:"Liberation Serif",serif;font-weight:700;text-anchor:middle;letter-spacing:0}
.hxt.sm{font-size:20px}.hxt.xs{font-size:13px}
.rf{position:relative;height:17px;background:linear-gradient(#2c2c2c,#161616);color:#fff;font-size:12px;line-height:17px;text-align:center;padding-right:12px;flex:none}
.pl{position:absolute;right:3px;top:0;color:#666;font-size:11px}

.ghbar{display:flex;align-items:center;height:38px;background:#fff;flex:none}
.ghbar .ti{display:flex;align-items:center;justify-content:center;flex:0 0 34px;height:33px}
.ti svg{width:28px;height:28px;display:block}
.ti.sp5{margin-left:3px}
.ti.sp1{margin-left:1px}
.ghbar .ti.foc{flex-basis:40px}
.ghbar .ti.eye{flex-basis:42px}
.ti.eye svg{width:28px;height:20px}
.sep{flex:0 0 1px;height:26px;background:#ccc}
.s1{margin-left:4px}
.s2{margin-left:8px}
.ti.s3{margin-left:7px}
.s4{margin-left:3px}
.ti.s4b{margin-left:2px}
.picked{border:1px solid #1a78d0}
.dn{flex:0 0 8px;width:8px;height:6px;margin:0 1px}
.grow{flex:1}
.combo{flex:0 0 180px;margin-left:4px;height:27px;border:1px solid #555;background:#fff;display:flex;align-items:center;justify-content:space-between;padding:0 8px 0 3px;color:#222;font-size:14px}
.chv{width:7px;height:7px;border-right:1px solid #444;border-bottom:1px solid #444;transform:rotate(45deg) translate(-2px,-2px)}

.canvas{position:relative;flex:1;margin-bottom:3px;overflow:hidden;background-color:#d4d0c8;background-image:linear-gradient(to right,#b9b6ad 1px,transparent 1px),linear-gradient(to bottom,#b9b6ad 1px,transparent 1px);background-size:135.2px 100%,100% 45.1px;background-position:119px 0,0 17px}
.wires{position:absolute;left:0;top:0;width:731px;height:758px}
.wires path{fill:none}
.wires .wo path{stroke:#4e4e4a;stroke-width:3.2}
.wires .wi path{stroke:#b8b6ae;stroke-width:1}
.wires .wb{stroke:#111;stroke-width:3}
.wires .wb.thin{stroke-width:2.2}
.wires .wg path{stroke:#565650;stroke-width:2.6}

.group{position:absolute;left:365px;top:587px;width:207px;height:72px;border-radius:20px;background:rgba(160,120,240,.62);border:1px solid rgba(130,100,190,.6)}

.pipe{position:absolute;left:33px;width:145px;height:74px;background:linear-gradient(#a9aaba,#7e7f8e);border:1px solid #55555e;border-left:0;border-radius:2px 3px 3px 2px;font-size:10px;color:#333;letter-spacing:0;padding-left:5px}
.p1{top:38px}.p2{top:122px}.p3{top:206px}
.zig{position:absolute;left:-1px;top:-1px;width:5px;height:74px}
.ptitle{text-align:center;height:18px;line-height:18px;border-bottom:1px solid;border-image:linear-gradient(to right,transparent,#c8c8d4,transparent) 1}
.prow{display:flex;height:18px;line-height:18px}
.prow span:first-child{flex:0 0 44px;text-align:right;margin-right:7px}
.types{display:flex;align-items:center;gap:5.500px;margin-left:2px}
.tx{width:10px;height:10px;margin-right:4.500px}
.tg{width:16px;height:14px}
.ts{width:16px;height:16px}

.panel{position:absolute;left:321px;top:4px;width:145px;height:91px;background:#ffff50;border:1px solid #5a5a40;border-radius:3px;font:9.85px/11px "Liberation Mono",monospace;letter-spacing:0;color:#111;overflow:hidden}
.prw{display:flex;height:22.6px;width:138px}
.prw b{flex:0 0 13px;font-weight:400;background:#f0f048;line-height:22px;text-align:center;margin-right:1px}
.prw span{width:124px}
.alt{background:#f4f450}
.pscroll{position:absolute;right:0;top:30px;width:6px;height:59px;background:#a0a03c;border-radius:2px}

.weave{position:absolute;left:428px;top:130px;width:59px;height:70px;background:linear-gradient(#a9aaba,#7e7f8e);border:1px solid #55555e;border-radius:3px;color:#333;font-size:10.5px;letter-spacing:0}
.wl{position:absolute}
.wl.l{left:5px;top:9px}.wl.v{left:5px;top:42px}.wl.o{left:41px;top:26px}
.wstrip{position:absolute;left:16px;top:1px;width:22px;height:66px;background:#2c2c2c;border-radius:3px;color:#eee;font-weight:700;font-size:12.5px;writing-mode:vertical-rl;transform:rotate(180deg);text-align:center;line-height:22px;letter-spacing:0}
.mcomp{position:absolute;left:705px;top:130px;width:40px;height:39px;background:linear-gradient(#a9aaba,#7e7f8e);border:1px solid #55555e;border-radius:3px;color:#333;font-size:10.5px;padding:8px 0 0 6px;letter-spacing:0}
.mstrip{position:absolute;left:19px;top:1px;width:22px;height:36px;background:#2c2c2c;border-radius:3px}

.slider{position:absolute;left:392px;top:614px;width:153px;height:19px;display:flex;border:1px solid #45454e;border-radius:3px;overflow:hidden;font-size:9.5px;letter-spacing:0;color:#333}
.sname{flex:0 0 44px;background:linear-gradient(#a9aaba,#7e7f8e);line-height:17px;text-align:center;border-right:1px solid #45454e}
.strack{flex:1;position:relative;background:linear-gradient(#e8e8e8,#c6c6c6);text-align:center;line-height:17px}
.sticks{position:absolute;left:9px;right:9px;top:4px;height:5px;border-left:1px solid #999;border-right:1px solid #999;border-bottom:1px solid #aaa;background:repeating-linear-gradient(to right,#aaa 0,#aaa 1px,transparent 1px,transparent 20px)}
.sval{position:relative;background:#dcdcdc;padding:0 2px;margin-left:-14px}
.sknob{position:absolute;left:62px;top:6px;width:7px;height:7px;border:2px solid #111;border-radius:50%;background:#fff}

.btn{position:absolute;left:402px;top:699px;width:94px;height:21px;display:flex;align-items:center;background:linear-gradient(#a9aaba,#7e7f8e);border:1px solid #45454e;border-radius:3px;font-size:10px;letter-spacing:0;color:#222}
.btn>span:first-child{flex:0 0 48px;text-align:center}
.bface{width:41px;height:15px;background:linear-gradient(#2e2e2e,#555);border:1px solid #222;display:block}
.tgl{left:401px;top:733px;height:20px}
.tgl .bface{font:11px/13px "Liberation Mono",monospace;color:#eee;text-align:center;width:42px;height:17px;background:#3c3c3c}

.grip{position:absolute;width:7.500px;height:7.500px;border:1.500px solid #111;border-radius:50%;background:#fff}
.a1{left:176px;top:72px}
.a2{left:176px;top:156px}
.a3{left:176px;top:239px}
.a4{left:316px;top:47px}
.a5{left:465px;top:47px}
.a6{left:423px;top:145px}
.a7{left:423px;top:177px}
.a8{left:486px;top:161px}
.a9{left:700px;top:146px}
.a10{left:543px;top:620px}
.a11{left:494px;top:706px}
.a12{left:493px;top:740px}
.dial{position:absolute;left:663px;top:689px;width:64px;height:64px}
.vthumb{position:absolute;left:0;top:723px;width:9px;height:34px;border:1px solid #111;background:linear-gradient(#ddd 0,#aaa 35%,#888 35%,#777 100%)}
```
